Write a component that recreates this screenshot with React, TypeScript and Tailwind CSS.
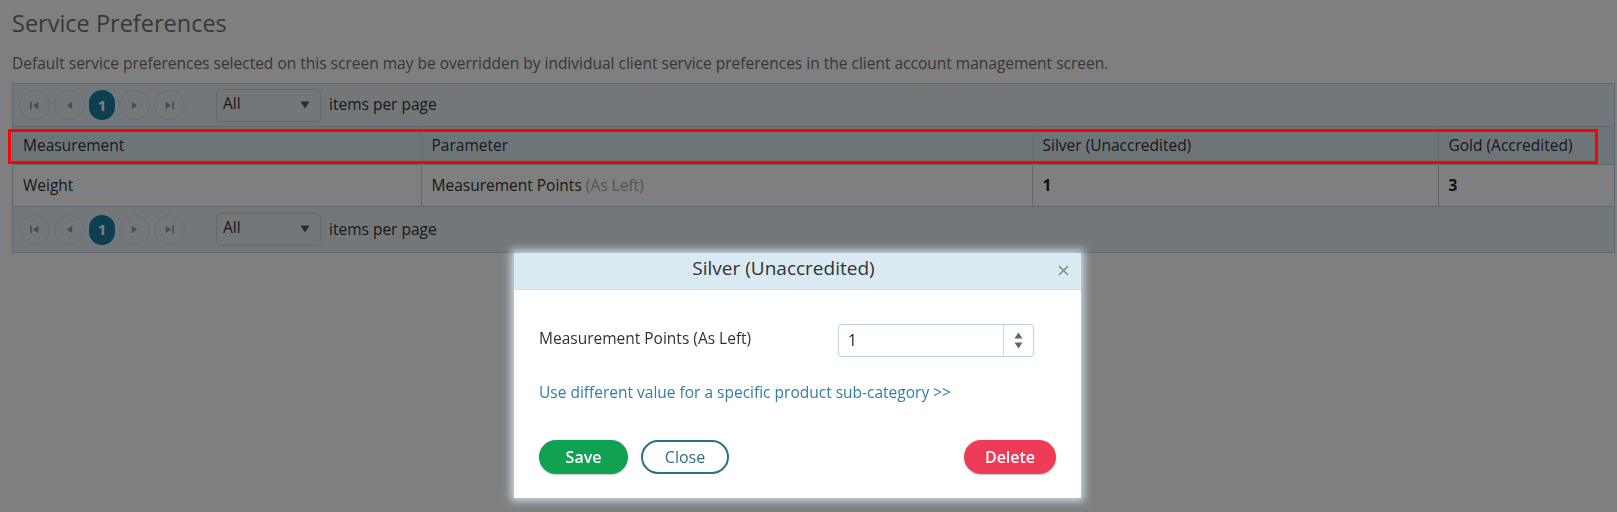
import React from "react";

const PagerIcon = ({ kind }: { kind: "first" | "prev" | "next" | "last" }) => (
  <svg width="11" height="11" viewBox="0 0 10 10" className="fill-[#8d9ea8]">
    {kind === "first" && (
      <>
        <rect x="1" y="1.5" width="1.5" height="7" />
        <path d="M8.5 1.5 L3.5 5 L8.5 8.5 Z" />
      </>
    )}
    {kind === "prev" && <path d="M7.5 1.5 L2.5 5 L7.5 8.5 Z" />}
    {kind === "next" && <path d="M2.5 1.5 L7.5 5 L2.5 8.5 Z" />}
    {kind === "last" && (
      <>
        <path d="M1.5 1.5 L6.5 5 L1.5 8.5 Z" />
        <rect x="7.5" y="1.5" width="1.5" height="7" />
      </>
    )}
  </svg>
);

const PagerButton = ({ kind }: { kind: "first" | "prev" | "next" | "last" }) => (
  <button
    type="button"
    className="flex h-[30px] w-[31px] items-center justify-center rounded-full border border-[#c8dbe4]"
  >
    <PagerIcon kind={kind} />
  </button>
);

const Pager = ({ bottom = false }: { bottom?: boolean }) => (
  <div
    className={
      "flex items-center bg-[#e6eff4] pl-[6px] " +
      (bottom ? "h-[45px]" : "h-[42px]")
    }
  >
    <div className="flex items-center gap-[4px]">
      <PagerButton kind="first" />
      <PagerButton kind="prev" />
      <span className="flex h-[30px] w-[26px] items-center justify-center rounded-full bg-[#15809f] text-[15px] font-bold text-white">
        1
      </span>
      <PagerButton kind="next" />
      <PagerButton kind="last" />
    </div>
    <div className="ml-[31px] flex h-[33px] w-[105px] justify-between rounded-[4px] border border-[#c3d8e2] pl-[6px] pr-[10px]">
      <span className="pt-[3px] leading-[20px] text-[#333]">All</span>
      <svg width="10" height="8" viewBox="0 0 10 8" className="mt-[11px] fill-[#555]">
        <path d="M0.5 0.5 H9.5 L5 7.5 Z" />
      </svg>
    </div>
    <span className="ml-[8px] text-[#333]">items per page</span>
  </div>
);

export default function App() {
  return (
    <div className="relative min-h-[512px] overflow-hidden bg-white font-['Open_Sans',sans-serif] text-[15.5px] text-[#333]">
      <div className="pl-3 pr-[2px] pt-[6px]">
        <h1 className="text-[23.5px] leading-[34px] text-[#707070]">Service Preferences</h1>
        <p className="mt-[13px] leading-[20px] text-[#6e6e6e]">
          Default service preferences selected on this screen may be overridden by individual client service
          preferences in the client account management screen.
        </p>
        <div className="mt-[10px] border border-[#b3d3e2]">
          <Pager />
          <table className="w-full table-fixed border-collapse">
            <colgroup>
              <col className="w-[408px]" />
              <col className="w-[611px]" />
              <col className="w-[406px]" />
              <col />
            </colgroup>
            <thead>
              <tr className="h-[38px] border-y border-[#b3d3e2] bg-[#daeaf2] text-left">
                <th className="border-r border-[#c6dbe6] px-[10px] font-normal">Measurement</th>
                <th className="border-r border-[#c6dbe6] px-[10px] font-normal">Parameter</th>
                <th className="border-r border-[#c6dbe6] px-[10px] font-normal">Silver (Unaccredited)</th>
                <th className="px-[10px] font-normal">Gold (Accredited)</th>
              </tr>
            </thead>
            <tbody>
              <tr className="h-[42px] border-b border-[#b3d3e2] bg-white">
                <td className="border-r border-[#cfcfcf] px-[10px]">Weight</td>
                <td className="border-r border-[#cfcfcf] px-[10px]">
                  Measurement Points <span className="text-[#aaa]">(As Left)</span>
                </td>
                <td className="border-r border-[#cfcfcf] px-[10px] font-bold text-[#222]">1</td>
                <td className="px-[10px] font-bold text-[#222]">3</td>
              </tr>
            </tbody>
          </table>
          <Pager bottom />
        </div>
      </div>

      {/* modal backdrop */}
      <div className="fixed inset-0 z-10 bg-black/50" />

      {/* highlight annotation */}
      <div className="pointer-events-none absolute left-[8px] top-[129px] z-20 h-[35px] w-[1590px] border-[3px] border-[#ff0000]" />

      <div className="fixed left-[514px] top-[253px] z-30 w-[567px] bg-white shadow-[0_0_8px_3px_rgba(215,238,250,0.85)]">
        <div className="relative flex h-[37px] items-center justify-center border-b border-[#cfe0e8] bg-[#daeaf2] pb-[6px]">
          <span className="-ml-[28px] text-[19px] leading-[24px] text-[#333]">Silver (Unaccredited)</span>
          <button type="button" className="absolute right-[11px] top-[11px]" aria-label="Close">
            <svg width="13" height="13" viewBox="0 0 13 13" className="stroke-[#8a8a8a]" strokeWidth="1.6">
              <path d="M2 2 L11 11 M11 2 L2 11" />
            </svg>
          </button>
        </div>
        <div className="px-[25px] pb-[24px] pt-[34px]">
          <div className="flex h-[33px] items-center">
            <label className="-mt-[4px] w-[299px] text-[#333]">Measurement Points (As Left)</label>
            <div className="flex h-[33px] w-[196px] rounded-[4px] border border-[#b9d2de]">
              <span className="flex-1 pl-[9px] pt-[5px] leading-[20px] text-[#222]">1</span>
              <div className="flex w-[30px] flex-col items-center justify-center gap-[3px] border-l border-[#c9dbe4]">
                <svg width="9" height="7" viewBox="0 0 9 7" className="fill-[#666]">
                  <path d="M4.5 0.5 L8.5 6.5 H0.5 Z" />
                </svg>
                <svg width="9" height="7" viewBox="0 0 9 7" className="fill-[#666]">
                  <path d="M0.5 0.5 H8.5 L4.5 6.5 Z" />
                </svg>
              </div>
            </div>
          </div>
          <a className="mt-[25px] block leading-[20px] text-[#2f7fa0]">
            Use different value for a specific product sub-category &gt;&gt;
          </a>
          <div className="mt-[38px] flex items-center">
            <button
              type="button"
              className="h-[34px] w-[89px] rounded-full bg-[#10a152] text-[16px] font-semibold text-white shadow-[0_1px_2px_rgba(0,0,0,0.25)]"
            >
              Save
            </button>
            <button
              type="button"
              className="ml-[13px] h-[34px] w-[88px] rounded-full border-2 border-[#2f6f86] bg-white text-[16px] text-[#2f6f86]"
            >
              Close
            </button>
            <button
              type="button"
              className="ml-auto h-[34px] w-[92px] rounded-full bg-[#ee3b58] text-[16px] font-semibold text-white shadow-[0_1px_2px_rgba(0,0,0,0.25)]"
            >
              Delete
            </button>
          </div>
        </div>
      </div>
    </div>
  );
}
